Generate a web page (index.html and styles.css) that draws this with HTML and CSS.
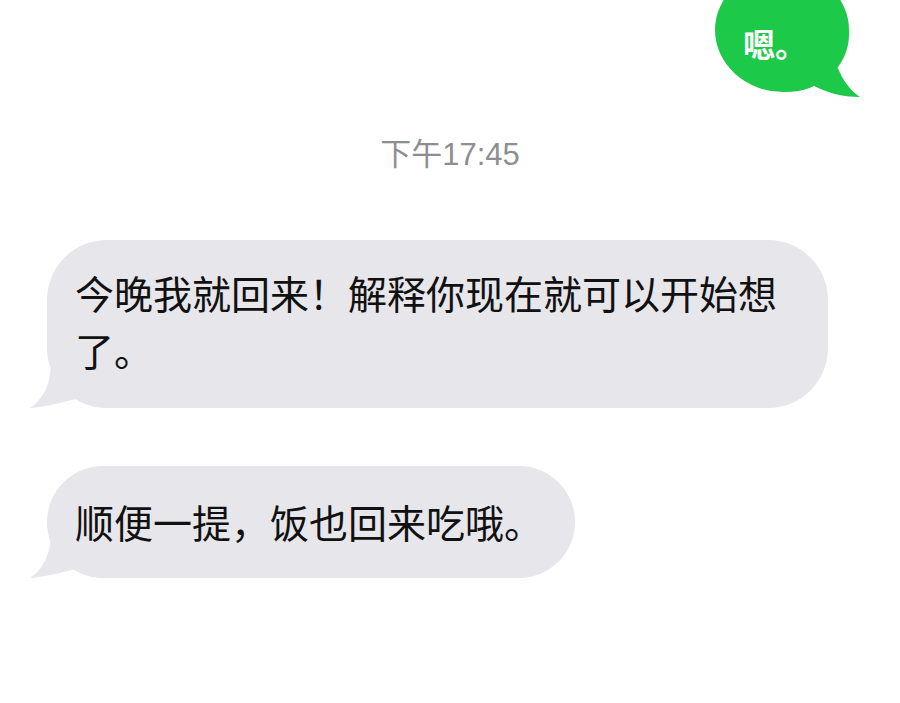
FILE: index.html
```html
<!DOCTYPE html>
<html lang="zh-CN">
<head>
    <meta charset="UTF-8">
    <meta name="viewport" content="width=device-width, initial-scale=1.0">
    <title>消息</title>
    <link rel="stylesheet" href="styles.css">
</head>
<body>
    <div class="chat">
        <div class="bubble sent">
            <span>嗯。</span>
            <svg class="tail" width="160" height="140" viewBox="0 0 160 140">
                <path d="M118 84 C124 106 134 120 145 127 C128 127 110 123 92 112 Z"></path>
            </svg>
        </div>

        <div class="time">下午17:45</div>

        <div class="bubble received">
            今晚我就回来！解释你现在就可以开始想了。
            <svg class="tail" width="60" height="60" viewBox="0 0 60 60">
                <path d="M24 12 C24 36 16 50 3 59 C18 58 36 53 54 49 L40 12 Z"></path>
            </svg>
        </div>

        <div class="bubble received second">
            顺便一提，饭也回来吃哦。
            <svg class="tail" width="60" height="60" viewBox="0 0 60 60">
                <path d="M24 12 C24 36 16 50 3 59 C18 58 36 53 54 49 L40 12 Z"></path>
            </svg>
        </div>
    </div>
</body>
</html>
```

FILE: styles.css
```css
body {
    margin: 0;
    background: #fff;
    font-family: "Noto Sans CJK SC", "Noto Sans", sans-serif;
    overflow: hidden;
}

.chat {
    display: flex;
    flex-direction: column;
}

.bubble {
    position: relative;
}

.bubble .tail {
    position: absolute;
    overflow: visible;
}

/* green one, top right */
.sent {
    align-self: flex-end;
    width: 134px;
    height: 122px;
    margin-top: -30px;
    margin-right: 51px;
    box-sizing: border-box;
    padding: 57px 0 0 28px;
    background: #1dc948;
    border-radius: 50% 50% 48% 52%;
    color: #fff;
    font-family: "Noto Sans CJK TC", "Noto Sans CJK SC", sans-serif;
    font-size: 32px;
    font-weight: bold;
    line-height: 32px;
}
.sent .tail {
    left: 0;
    top: 0;
}
.sent .tail path {
    fill: #1dc948;
}

.time {
    margin-top: 48px;
    text-align: center;
    font-family: "Liberation Sans", "Noto Sans CJK SC", sans-serif;
    font-size: 31px;
    line-height: 30px;
    color: #8e8e92;
}

.received {
    align-self: flex-start;
    max-width: 781px;
    box-sizing: border-box;
    margin: 70px 0 0 47px;
    padding: 24px 32px 30px 28px;
    background: #e6e6eb;
    border-radius: 60px;
    color: #111;
    font-size: 39px;
    line-height: 57px;
}
.received.second {
    margin-top: 58px;
    padding-top: 27px;
    padding-bottom: 28px;
}
.received .tail {
    left: -20px;
    bottom: -1px;
}
.received .tail path {
    fill: #e6e6eb;
}
```
